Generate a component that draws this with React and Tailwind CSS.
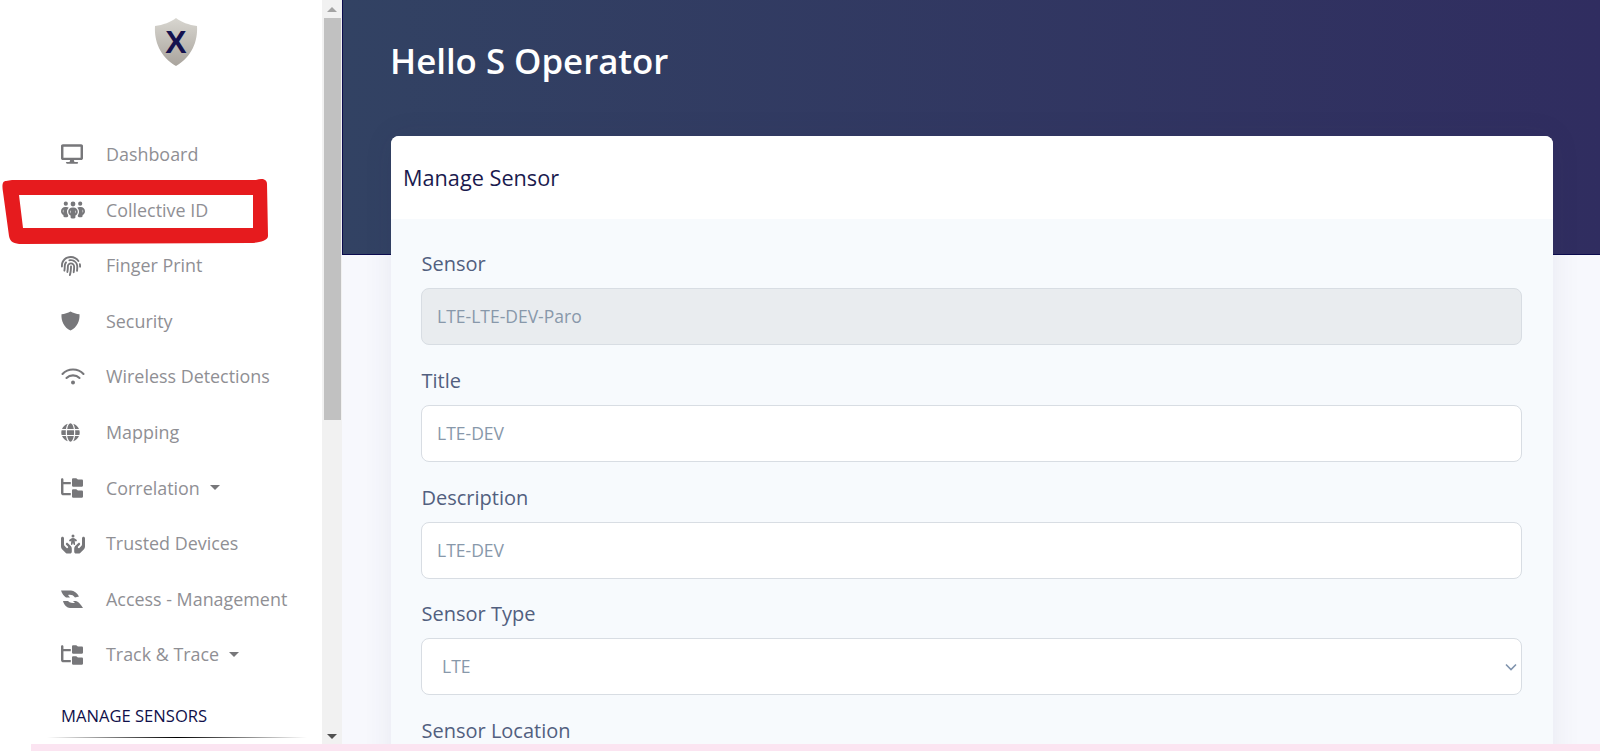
import React from 'react';
import { FaDesktop, FaFingerprint, FaGlobe } from 'react-icons/fa';
import { FaFolderTree, FaPeopleGroup, FaHandsHoldingChild } from 'react-icons/fa6';

const ShieldIcon = () => (
  <svg width="19" height="20" viewBox="0 0 19 20" fill="currentColor">
    <path d="M9.5 0.5 C12 2 15.5 3 18.5 3.2 C19 10 16 16.5 9.5 19.5 C3 16.5 0 10 0.5 3.2 C3.5 3 7 2 9.5 0.5 Z" />
  </svg>
);

const WifiIcon = () => (
  <svg width="24" height="17" viewBox="0 0 24 17" fill="none" stroke="currentColor" strokeWidth="2.1" strokeLinecap="round">
    <path d="M1.5 6 C7 0 17 0 22.5 6" />
    <path d="M5.5 10 C9 6.5 15 6.5 18.5 10" />
    <circle cx="12" cy="14.5" r="2" fill="currentColor" stroke="none" />
  </svg>
);

const HandsIcon = () => (
  <svg width="22" height="19" viewBox="0 0 22 19" fill="currentColor">
    <path d="M0 0.5 H10 C13 0.5 16 3 18 6.5 L14 7.5 C12 5 10 4.5 7 5 L9 7.5 H5 C3 6 1 4 0 0.5 Z" />
    <path d="M2 11 H7 C9 13 11 13 14 13 L12 11 H15 C18 12 20 15 22 18 H9 C6 18 3 15 2 11 Z" />
  </svg>
);

const navItems = [
  { label: 'Dashboard', icon: <FaDesktop />, size: 'text-[22px]' },
  { label: 'Collective ID', icon: <FaPeopleGroup />, size: 'text-[24px]' },
  { label: 'Finger Print', icon: <FaFingerprint />, size: 'text-[20px]' },
  { label: 'Security', icon: <ShieldIcon />, size: 'text-[19px]' },
  { label: 'Wireless Detections', icon: <WifiIcon />, size: 'text-[24px]' },
  { label: 'Mapping', icon: <FaGlobe />, size: 'text-[19px]' },
  { label: 'Correlation', icon: <FaFolderTree />, size: 'text-[22px]', caret: true },
  { label: 'Trusted Devices', icon: <FaHandsHoldingChild />, size: 'text-[24px]' },
  { label: 'Access - Management', icon: <HandsIcon />, size: 'text-[20px]' },
  { label: 'Track & Trace', icon: <FaFolderTree />, size: 'text-[22px]', caret: true },
];

const fields = [
  { label: 'Sensor', value: 'LTE-LTE-DEV-Paro', disabled: true },
  { label: 'Title', value: 'LTE-DEV' },
  { label: 'Description', value: 'LTE-DEV' },
  { label: 'Sensor Type', value: 'LTE', select: true },
];

const Logo = () => (
  <svg width="44" height="50" viewBox="0 0 44 50">
    <defs>
      <linearGradient id="shield" x1="0" y1="0" x2="0" y2="1">
        <stop offset="0" stopColor="#d8d6d0" />
        <stop offset="1" stopColor="#a9a49d" />
      </linearGradient>
    </defs>
    <path d="M22 1 C27 5 35 8 43 9 C44 24 38 40 22 49 C6 40 0 24 1 9 C9 8 17 5 22 1 Z" fill="url(#shield)" />
    <text x="22" y="36" textAnchor="middle" fontFamily="Liberation Sans, sans-serif" fontWeight="700" fontSize="32" fill="#14124f">X</text>
  </svg>
);

const NavRow = ({ item }) => (
  <div className="flex h-[55.6px] items-center">
    <span className={`flex w-[45px] shrink-0 text-[#77777a] ${item.size}`}>{item.icon}</span>
    <span className="text-[17.9px] text-[#8f8f94]">{item.label}</span>
    {item.caret && <span className="ml-[10px] h-0 w-0 border-x-[5px] border-t-[5px] border-x-transparent border-t-[#77777a]" />}
  </div>
);

const Sidebar = () => (
  <aside className="flex w-[322px] shrink-0 flex-col bg-white">
    <div className="flex justify-center pl-[30px] pt-[17px]">
      <Logo />
    </div>
    <nav className="mt-[59.6px] pl-[61px]">
      {navItems.map((item) => (
        <NavRow key={item.label} item={item} />
      ))}
    </nav>
    <p className="mt-[21px] pl-[61px] text-[16.6px] text-[#10104a]">MANAGE SENSORS</p>
    <div className="ml-[47px] mr-[15px] mt-[9px] h-px bg-gradient-to-r from-transparent via-black to-transparent" />
  </aside>
);

const Scrollbar = () => (
  <div className="flex w-[20px] shrink-0 flex-col items-center bg-[#f1f1f1]">
    <div className="flex h-[18px] items-center">
      <span className="h-0 w-0 border-x-[5px] border-b-[5px] border-x-transparent border-b-[#a3a3a3]" />
    </div>
    <div className="h-[402px] w-[17px] bg-[#c1c1c1]" />
    <div className="flex flex-1 items-end pb-[12px]">
      <span className="h-0 w-0 border-x-[5px] border-t-[5px] border-x-transparent border-t-[#505050]" />
    </div>
  </div>
);

const Field = ({ field }) => (
  <div className="mb-[21.8px]">
    <label className="mb-[10px] block h-[28px] pl-[0.5px] text-[20px] leading-[28px] text-[#525f7f]">{field.label}</label>
    <div className="relative">
      {field.select ? (
        <select className="h-[57px] w-full appearance-none rounded-[8px] border border-[#d8dde3] bg-white pb-[1px] pl-[20px] text-[17.5px] text-[#8898aa] outline-none">
          <option>{field.value}</option>
        </select>
      ) : (
        <input
          readOnly
          value={field.value}
          className={`h-[57px] w-full rounded-[8px] border border-[#d8dde3] px-[15px] pb-[1px] text-[17.5px] text-[#8898aa] outline-none ${field.disabled ? 'bg-[#e9ecef]' : 'bg-white'}`}
        />
      )}
      {field.select && (
        <svg className="absolute right-[5px] top-[25px]" width="12" height="8" viewBox="0 0 12 8" fill="none">
          <path d="M1 1.5 L6 6.5 L11 1.5" stroke="#8094ae" strokeWidth="1.6" />
        </svg>
      )}
    </div>
  </div>
);

export default function App() {
  return (
    <div className="relative flex h-[751px] overflow-hidden bg-white font-['Open_Sans',sans-serif]">
      <Sidebar />
      <Scrollbar />
      <main className="flex-1 bg-[#f7f8fd]">
        <header className="h-[255px] border-b border-l border-[#0b0b4e] bg-gradient-to-r from-[#324263] to-[#302d60] pl-[47px] pt-[37px]">
          <h1 className="text-[34.8px] font-semibold leading-[48px] text-white">Hello S Operator</h1>
        </header>
        <section className="relative ml-[49px] mr-[47px] -mt-[119px] h-[700px] overflow-hidden rounded-t-[8px] bg-[#f7fafd] shadow-[0_0_30px_rgba(50,50,93,0.08)]">
          <div className="flex h-[83px] items-center bg-white pl-[12px] pt-[1px]">
            <h2 className="text-[21.7px] font-medium text-[#1a1a4e]">Manage Sensor</h2>
          </div>
          <div className="pl-[30px] pr-[31px] pt-[31px]">
            {fields.map((field) => (
              <Field key={field.label} field={field} />
            ))}
            <label className="block h-[28px] pl-[0.5px] text-[20px] leading-[28px] text-[#525f7f]">Sensor Location</label>
          </div>
        </section>
      </main>

      {/* marker annotation drawn on top of the screenshot */}
      <svg className="absolute left-0 top-0" width="280" height="260" viewBox="0 0 280 260">
        <path
          fillRule="evenodd"
          fill="#e61b1e"
          d="M6 181 C2 181 2 186 3 192 L9 236 C10 242 14 244 22 244 L250 243 C258 243 268 241 268 236 L267 184 C267 179 262 178 256 180 L12 180 Z M19 195 L253 195 L253 228 L23 228 Z"
        />
      </svg>
      <div className="absolute bottom-0 left-[31px] right-0 h-[7px] bg-[#fbe4f1]" />
    </div>
  );
}
